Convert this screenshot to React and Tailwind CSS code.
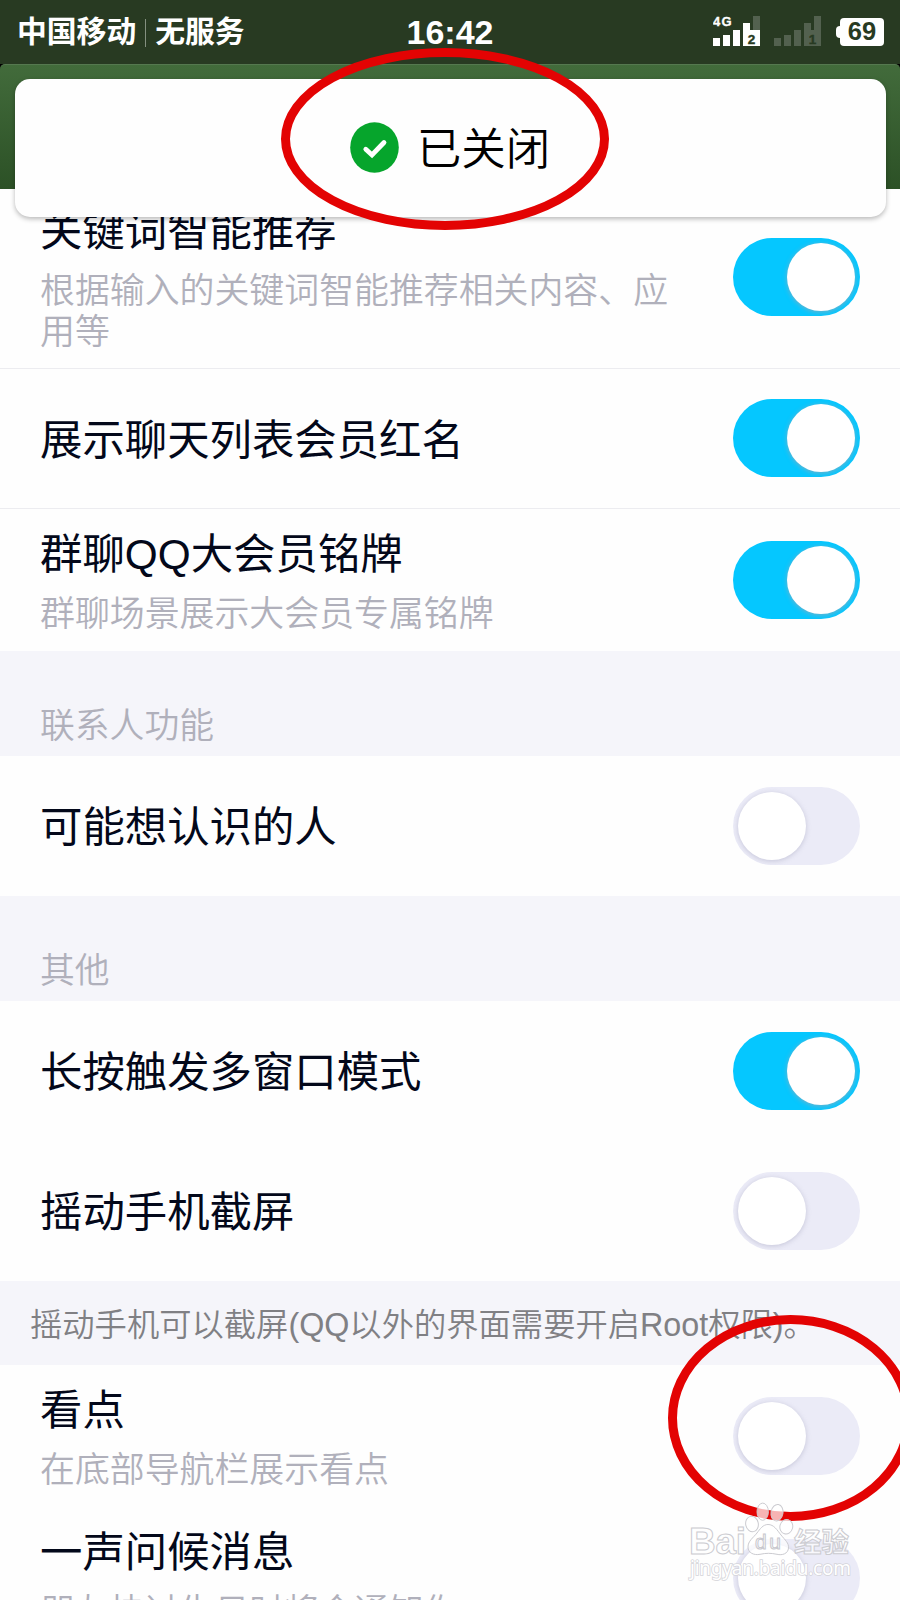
import React from "react";

const FONT = "font-['Liberation_Sans','Noto_Sans_CJK_SC',sans-serif]";

function Toggle({ on }) {
  return (
    <div className={`mb-px flex h-[78px] w-[127.5px] shrink-0 items-center overflow-hidden rounded-full px-[5px] ${on ? "justify-end bg-[#05c7ff]" : "justify-start bg-[#ebebf7]"}`}>
      <div className={`size-[68px] rounded-full bg-white ${on ? "shadow-[0px_1px_5px_rgba(150,170,185,0.8)]" : "shadow-[0px_1px_5px_rgba(150,150,180,0.45)]"}`} />
    </div>
  );
}

function Row({ title, sub, on, className }) {
  return (
    <div className={`flex shrink-0 items-center justify-between border-[#ececf0] bg-[#fefefe] pr-[40px] pl-10 ${className}`}>
      <div className={`flex w-[640px] flex-col ${sub ? "" : "pt-1"}`}>
        <div className="text-[42.4px] leading-[58px] whitespace-nowrap text-[#03081a]">{title}</div>
        {sub && <div className="mt-[10px] text-[34.9px] leading-[40.5px] font-[350] text-[#b0b0bb]">{sub}</div>}
      </div>
      <Toggle on={on} />
    </div>
  );
}

function Section({ children }) {
  return (
    <div className="flex h-[105px] shrink-0 items-end bg-[#f5f5fa] pb-[10px] pl-10 text-[34.8px] leading-[41px] font-[350] text-[#b0b0bb]">
      {children}
    </div>
  );
}

function Signal({ dim, digit }) {
  const c = dim ? "#53614f" : "#ffffff";
  return (
    <svg className="h-[32px] w-[48px]" viewBox="0 0 48 32">
      {!dim && <text x="0" y="10" fontSize="13" fontWeight="bold" fill="#fff" stroke="#fff" strokeWidth="0.3" fontFamily="Liberation Sans" textLength="18.5">4G</text>}
      <rect x="0" y="22" width="7" height="8" fill={c} />
      <rect x="10" y="19" width="7" height="11" fill={c} />
      <rect x="20" y="14" width="7" height="16" fill={c} />
      <rect x="30" y="7" width="7" height="23" fill={c} />
      <rect x="40" y="0" width="7" height="30" fill="#53614f" />
      <rect x="30" y="14" width="17" height="16" fill={c} />
      <text x="38.5" y="28" fontSize="13.5" fontWeight="bold" textAnchor="middle" fill="#283a22" stroke="#283a22" strokeWidth="0.4" fontFamily="Liberation Sans">{digit}</text>
    </svg>
  );
}

function StatusBar() {
  return (
    <div className="grid h-16 shrink-0 grid-cols-3 items-center bg-[#283a22] text-white">
      <div className="flex items-center pt-px pl-[17px] text-[29.8px] font-bold whitespace-nowrap">
        <span>中国移动</span>
        <span className="mx-[9px] h-7 w-px bg-[#849080]" />
        <span>无服务</span>
      </div>
      <div className="text-center text-[34px] font-bold">16:42</div>
      <div className="flex items-center justify-end pr-4">
        <Signal digit="2" />
        <div className="w-[13px]" />
        <Signal dim digit="1" />
        <div className="w-[14px]" />
        <div className="h-3 w-1 rounded-l-sm bg-white" />
        <div className="flex h-[28px] w-[44px] items-center justify-center rounded-[4px] bg-white text-[25.5px] leading-none font-bold text-[#283a22]">69</div>
      </div>
    </div>
  );
}

function Toast() {
  return (
    <div className="absolute top-[79px] left-[14.5px] flex h-[138px] w-[871px] items-center justify-center gap-[18px] rounded-[15px] bg-[#fefefe] shadow-[0_2px_5px_rgba(0,0,0,0.28)]">
      <svg className="mb-px h-[51px] w-[49px]" viewBox="0 0 49 51">
        <ellipse cx="24.5" cy="25.5" rx="24.3" ry="25.3" fill="#06a52c" />
        <path d="M15.8 27.2 L22 33 L34 20.5" fill="none" stroke="#fff" strokeWidth="4.8" strokeLinecap="round" strokeLinejoin="miter" />
      </svg>
      <div className="pt-1 text-[44.5px] leading-[60px] font-[350] text-black">已关闭</div>
    </div>
  );
}

function Annotations() {
  return (
    <svg className="absolute top-0 left-0" width="900" height="1600" viewBox="0 0 900 1600">
      <g fill="none" stroke="#e30303" strokeWidth="9">
        <ellipse cx="445" cy="139" rx="159.5" ry="86.5" />
        <ellipse cx="790.5" cy="1418" rx="118" ry="98.5" />
      </g>
    </svg>
  );
}

function Watermark() {
  return (
    <svg className="absolute top-[1490px] left-[680px]" width="180" height="110" viewBox="0 0 180 110">
      <g fill="#fff" fillOpacity="0.7" stroke="#cbcbd0" strokeWidth="1">
        <ellipse cx="82.7" cy="21.7" rx="5.7" ry="8.6" />
        <ellipse cx="97" cy="22.7" rx="6" ry="8.3" transform="rotate(10 97 22.7)" />
        <ellipse cx="72" cy="34" rx="6.3" ry="7.8" transform="rotate(-12 72 34)" />
        <ellipse cx="106.3" cy="36.7" rx="6.4" ry="7.3" transform="rotate(14 106.3 36.7)" />
        <path d="M88 34.5 C94 34.5 97 40 101 45 C105 50 109 53 108.500 58 C108 64 102 65.500 97 64.300 C91 63 86 63 80 64.300 C74 65.500 68 63 68 57 C68 51 73 48 77 43 C80 39 83 34.500 88 34.500 Z" />
        <text x="9" y="64" fontSize="37" fontWeight="bold" fontFamily="Liberation Sans" textLength="57">Bai</text>
        <text x="75" y="59" fontSize="21" fontFamily="Liberation Sans" textLength="26" stroke="#c8c8ce">du</text>
        <text x="114" y="62" fontSize="27.5" fontWeight="bold" fontFamily="Noto Sans CJK SC">经验</text>
      </g>
      <text x="10" y="85" fontSize="19" fill="#fff" stroke="#d4d4d9" strokeWidth="1.6" paintOrder="stroke" fontFamily="Noto Sans" textLength="161">jingyan.baidu.com</text>
    </svg>
  );
}

export default function App() {
  return (
    <div className={`relative flex h-[1600px] w-[900px] flex-col overflow-hidden bg-[#fefefe] ${FONT}`}>
      <StatusBar />
      <div className="shrink-0 bg-black">
        <div className="h-[125px] rounded-t-[5px] border-t border-[#55784f] bg-linear-to-b from-[#426b3b] to-[#2c5126]" />
      </div>
      <Row className="h-[179px] pb-[2px]" title="关键词智能推荐" sub="根据输入的关键词智能推荐相关内容、应用等" on />
      <Row className="h-[140px] border-t" title="展示聊天列表会员红名" on />
      <Row className="h-[143px] border-t" title="群聊QQ大会员铭牌" sub="群聊场景展示大会员专属铭牌" on />
      <Section>联系人功能</Section>
      <Row className="h-[140px]" title="可能想认识的人" />
      <Section>其他</Section>
      <Row className="h-[140px]" title="长按触发多窗口模式" on />
      <Row className="h-[140px]" title="摇动手机截屏" />
      <div className="flex h-[84px] shrink-0 items-center bg-[#f5f5fa] pt-1 pl-[30px] text-[32.3px] font-[350] whitespace-nowrap text-[#808084]">摇动手机可以截屏(QQ以外的界面需要开启Root权限)。</div>
      <Row className="h-[142px]" title="看点" sub="在底部导航栏展示看点" />
      <Row className="h-[142px]" title="一声问候消息" sub="朋友快过生日时将会通知你" />
      <Toast />
      <Annotations />
      <Watermark />
    </div>
  );
}
